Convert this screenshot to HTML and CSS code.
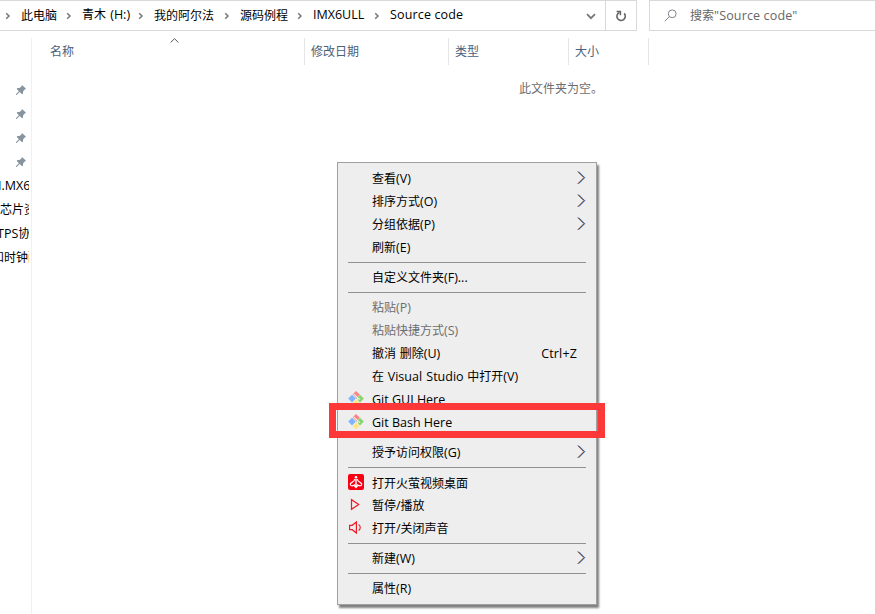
FILE: index.html
```html
<!DOCTYPE html>
<html lang="zh-CN">
<head>
  <meta charset="UTF-8" />
  <title>Source code</title>
  <link rel="stylesheet" href="styles.css">
</head>
<body>
  <svg class="defs" width="0" height="0">
    <symbol id="crumb" viewBox="0 0 6 8"><path d="M1.2 1.2 4 4 1.2 6.8" fill="none" stroke="#777" stroke-width="1.5"/></symbol>
    <symbol id="pin" viewBox="0 0 12 12"><path d="M7 1 11 4.8 9.8 5.4 8 7.4 8 9.6 7 10.3 4.7 8 1.6 11 .9 11 .9 10.3 3.9 7.2 1.7 5 2.5 4.1 4.6 4 6.6 2.2Z" fill="#87939d"/></symbol>
    <symbol id="arrow" viewBox="0 0 9 14">
      <path d="M.4 .5 6.6 6.7 .4 12.9" fill="none" stroke="#e8a060" stroke-width="1"/>
      <path d="M1.8 .7 7.8 6.7 1.8 12.7" fill="none" stroke="#2f7fd8" stroke-width="1"/>
      <path d="M1.1 .7 7.1 6.7 1.1 12.7" fill="none" stroke="#3a2f4a" stroke-width=".8"/>
    </symbol>
    <symbol id="git" viewBox="0 0 16 16">
      <path d="M4 3.8 7.8 7.6 4 11.4.2 7.6Z" fill="#80b3ff"/>
      <path d="M12 3.8 15.8 7.6 12 11.4 8.2 7.6Z" fill="#87d370"/>
      <path d="M8 0 11.6 3.6 8.6 7.2 4.6 3.4Z" fill="#ff8080"/>
      <path d="M8 8.6 11.4 12 8 15.4 4.6 12Z" fill="#ffe680"/>
      <path d="M5.6 2.8 9.6 6.6V11M9.4 6.4 12 8.6" fill="none" stroke="#ededed" stroke-width="1.1"/>
    </symbol>
  </svg>

  <div class="toolbar">
    <div class="address">
      <svg class="crumb"><use href="#crumb"/></svg><span class="c1">此电脑</span>
      <svg class="crumb"><use href="#crumb"/></svg><span class="c2">青木 <i>(H:)</i></span>
      <svg class="crumb"><use href="#crumb"/></svg><span class="c3">我的阿尔法</span>
      <svg class="crumb"><use href="#crumb"/></svg><span class="c4">源码例程</span>
      <svg class="crumb"><use href="#crumb"/></svg><span class="c5"><i>IMX6ULL</i></span>
      <svg class="crumb"><use href="#crumb"/></svg><span class="c6"><i>Source code</i></span>
      <svg class="drop" viewBox="0 0 10 7"><path d="M1 1.2 5 5.2 9 1.2" fill="none" stroke="#777" stroke-width="1.8"/></svg>
    </div>
    <div class="refresh">
      <svg width="12" height="12" viewBox="0 0 12 12"><path d="M9.2 3.4A4.2 4.2 0 1 1 4.4 2.4" fill="none" stroke="#666" stroke-width="1.6"/><path d="M1.6 1.4H5.4V5.2" fill="none" stroke="#666" stroke-width="1.5"/></svg>
    </div>
    <div class="search">
      <svg width="13" height="13" viewBox="0 0 13 13"><circle cx="8.2" cy="4.8" r="3.9" fill="none" stroke="#8a7f8c"/><path d="M5.4 7.6.8 12.2" stroke="#8a7f8c"/></svg>
      <span>搜索<i>"Source code"</i></span>
    </div>
  </div>

  <div class="main">
    <div class="sidebar">
      <div class="pinned"><svg><use href="#pin"/></svg></div>
      <div class="pinned"><svg><use href="#pin"/></svg></div>
      <div class="pinned"><svg><use href="#pin"/></svg></div>
      <div class="pinned"><svg><use href="#pin"/></svg></div>
      <div class="folder s1"><i>I.MX6</i></div>
      <div class="folder s2">芯片资</div>
      <div class="folder s3"><i>TPS</i>协</div>
      <div class="folder s4">和时钟配</div>
    </div>
    <div class="files">
      <div class="columns">
        <div class="col name">名称<svg class="sort" viewBox="0 0 9 5"><path d="M.6 4.5 4.5.7 8.4 4.5" fill="none" stroke="#555"/></svg></div>
        <div class="col date">修改日期</div>
        <div class="col type">类型</div>
        <div class="col size">大小</div>
      </div>
      <div class="empty">此文件夹为空。</div>
    </div>
  </div>

  <div class="menu">
    <div class="item"><span>查看<i>(V)</i></span><svg class="arrow"><use href="#arrow"/></svg></div>
    <div class="item"><span>排序方式<i>(O)</i></span><svg class="arrow"><use href="#arrow"/></svg></div>
    <div class="item"><span>分组依据<i>(P)</i></span><svg class="arrow"><use href="#arrow"/></svg></div>
    <div class="item"><span>刷新<i>(E)</i></span></div>
    <div class="sep"></div>
    <div class="item"><span>自定义文件夹<i>(F)...</i></span></div>
    <div class="sep"></div>
    <div class="item disabled"><span>粘贴<i>(P)</i></span></div>
    <div class="item disabled"><span>粘贴快捷方式<i>(S)</i></span></div>
    <div class="item"><span class="spaced">撤消 删除<i>(U)</i></span><span class="key"><i>Ctrl+Z</i></span></div>
    <div class="item"><span class="spaced">在 <i>Visual Studio</i> 中打开<i>(V)</i></span></div>
    <div class="item"><svg class="icon"><use href="#git"/></svg><span><i>Git GUI Here</i></span></div>
    <div class="item"><svg class="icon"><use href="#git"/></svg><span><i>Git Bash Here</i></span></div>
    <div class="sep"></div>
    <div class="item"><span>授予访问权限<i>(G)</i></span><svg class="arrow"><use href="#arrow"/></svg></div>
    <div class="sep"></div>
    <div class="item">
      <svg class="icon" viewBox="0 0 16 16"><rect width="16" height="16" rx="2" fill="#f80012"/><circle cx="8" cy="3.3" r="1.3" fill="#fff"/><path d="M6.8 5.2C6.3 7.5 4.8 8 3 9 1.6 10.2 2.4 12.2 5 11.7L7 10.6M9.2 5.2C9.7 7.5 11.2 8 13 9 14.4 10.2 13.6 12.2 11 11.7L9 10.6" fill="none" stroke="#fff" stroke-width="1.2"/><path d="M8 5V13M6.3 11.5 8 13.4 9.7 11.5" fill="none" stroke="#fff" stroke-width="1.4"/></svg>
      <span>打开火萤视频桌面</span>
    </div>
    <div class="item">
      <svg class="icon" viewBox="0 0 16 16"><path d="M3.5 2.7V12.3L10.7 7.5Z" fill="none" stroke="#f01a24" stroke-width="1.2"/></svg>
      <span>暂停<i>/</i>播放</span>
    </div>
    <div class="item">
      <svg class="icon" viewBox="0 0 16 16"><path d="M1.6 5.3H4.2L8.4 2V13L4.2 9.7H1.6Z" fill="none" stroke="#f01a24" stroke-width="1.2"/><path d="M10.6 4.6C12.8 5.8 12.8 9.2 10.6 10.4" fill="none" stroke="#f01a24" stroke-width="1.1"/></svg>
      <span>打开<i>/</i>关闭声音</span>
    </div>
    <div class="sep"></div>
    <div class="item"><span>新建<i>(W)</i></span><svg class="arrow"><use href="#arrow"/></svg></div>
    <div class="sep"></div>
    <div class="item"><span>属性<i>(R)</i></span></div>
  </div>
  <div class="highlight"></div>
</body>
</html>
```

FILE: styles.css
```css
* {
  box-sizing: border-box;
}

body {
  margin: 0;
  width: 875px;
  height: 614px;
  overflow: hidden;
  position: relative;
  background: #fff;
  color: #000;
  font-family: "Noto Sans CJK SC", sans-serif;
  font-size: 12px;
  line-height: 18px;
  white-space: nowrap;
}

i {
  font-family: "Open Sans", "Noto Sans", sans-serif;
  font-style: normal;
  font-size: 12.5px;
}

svg {
  display: block;
  flex: none;
}

.defs {
  position: absolute;
}

/* address bar */
.toolbar {
  display: flex;
  height: 31px;
}

.address,
.refresh,
.search {
  display: flex;
  align-items: center;
  border: 1px solid #d9d9d9;
}

.address {
  width: 605px;
  border-width: 1px 0;
  padding-left: 5px;
}

.address span {
  margin-left: 10px;
  padding-bottom: 2px;
}

.crumb {
  width: 6px;
  height: 8px;
}

.c1 { width: 45px; }
.c2 { width: 56px; word-spacing: 1.5px; }
.c3 { width: 70px; }
.c4 { width: 57px; }
.c5 { width: 61px; }
.c6 { letter-spacing: 0.15px; }

.drop {
  width: 10px;
  height: 7px;
  margin: 2px 9px 0 auto;
}

.refresh {
  width: 32px;
  justify-content: center;
}

.search {
  width: 226px;
  margin-left: 12px;
  padding-left: 14px;
  border-right: 0;
  gap: 13px;
  color: #666;
}

.search i {
  letter-spacing: 0.15px;
}

/* content */
.main {
  display: flex;
  height: 583px;
}

.sidebar {
  width: 32px;
  margin-top: 7px;
  padding: 40px 2px 0 0;
  border-right: 1px solid #f0f0f0;
}

.pinned {
  height: 24px;
  display: flex;
  align-items: center;
  padding-left: 15px;
}

.pinned svg {
  width: 12px;
  height: 12px;
}

.folder {
  height: 24px;
  line-height: 22px;
  width: 29px;
  overflow: hidden;
}

.s1 { text-indent: -2px; }
.s2 { text-indent: 0; }
.s3 { text-indent: -3px; }
.s4 { text-indent: -8px; }

.files {
  flex: 1;
  padding-top: 7px;
}

.columns {
  display: flex;
  height: 27px;
  color: #4c607a;
}

.col {
  display: flex;
  align-items: center;
  padding: 0 0 2px 6px;
  border-right: 1px solid #e5e5e5;
}

.name {
  width: 273px;
  padding-left: 18px;
}

.date { width: 144px; }
.type { width: 120px; }
.size { width: 80px; }

.sort {
  width: 9px;
  height: 5px;
  margin-left: 96px;
  align-self: flex-start;
}

.empty {
  margin: 14px 0 0 487px;
  color: #6d6d6d;
}

/* context menu */
.menu {
  position: absolute;
  left: 337px;
  top: 162px;
  width: 260px;
  height: 443px;
  padding: 4px 10px;
  border: 1px solid #a0a0a0;
  background: #eee;
  box-shadow: 2px 3px 2px rgba(0, 0, 0, 0.5);
}

.item {
  display: flex;
  align-items: center;
  height: 23px;
  padding-left: 24px;
}

.disabled {
  color: #6d6d6d;
}

.spaced {
  word-spacing: 1px;
}

.icon {
  width: 16px;
  height: 16px;
  margin: -1px 8px 0 -24px;
}

.arrow {
  width: 9px;
  height: 14px;
  margin: -2px 0 0 auto;
}

.key {
  margin: 0 9px 0 auto;
  letter-spacing: 0.15px;
}

.sep {
  height: 7px;
  border: solid #eee;
  border-width: 3px 0;
  background: #919191;
}

.highlight {
  position: absolute;
  left: 329px;
  top: 403px;
  width: 276px;
  height: 35px;
  border: 7px solid #fd3838;
}
```
